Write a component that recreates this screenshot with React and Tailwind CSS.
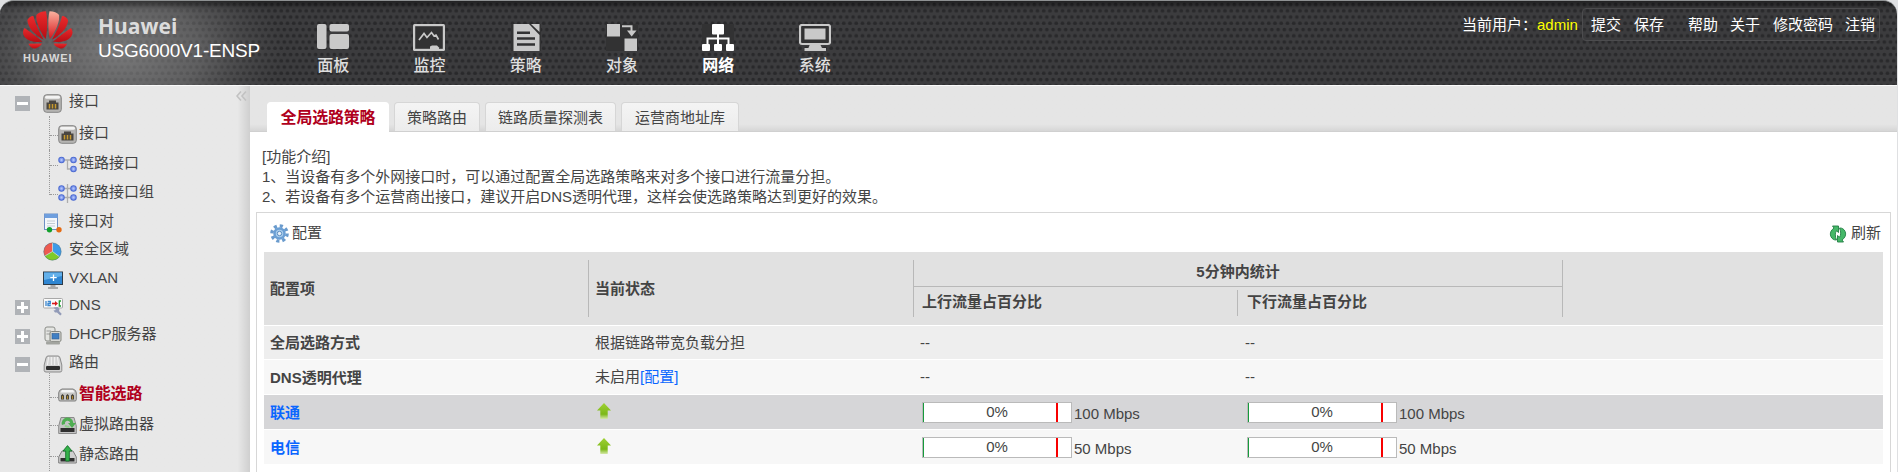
import React from "react";

const petals = [
  "M22.6 28 C16 19 12.6 10 13.4 4 C15 1.6 19 .3 23 .2 C24.8 8 24.4 20 22.6 28Z",
  "M20.6 28.8 C12 24 5 17 4.4 9.5 C5 7 8 5 10.4 5 C12.5 14 17 22 20.6 28.8Z",
  "M19.6 30.8 C11 31.5 4.5 30 1.3 25.5 C-.6 22.5 -.3 20 1.5 17 C7 20.5 14 26 19.6 30.8Z",
  "M19 32.6 L5.4 32.8 C7 36.5 10 38.2 13 37.3 C16 36.3 18 34.5 19 32.6Z",
];

function Logo() {
  return (
    <svg width="50" height="39" viewBox="0 0 50 39">
      <defs>
        <linearGradient id="red" x1="0" y1="0" x2="0" y2="1">
          <stop offset="0" stopColor="#ea2a2c" />
          <stop offset="1" stopColor="#b80d14" />
        </linearGradient>
        <linearGradient id="shine" x1="0" y1="0" x2="0" y2="1">
          <stop offset="0" stopColor="#f9b3a0" />
          <stop offset="1" stopColor="#d8151b" />
        </linearGradient>
      </defs>
      <g fill="url(#red)">{petals.map((d) => <path key={d} d={d} />)}</g>
      <g fill="url(#red)" transform="translate(49.5 0) scale(-1 1)">
        {petals.map((d, i) => <path key={d} d={d} fill={i === 0 ? "url(#shine)" : undefined} />)}
      </g>
    </svg>
  );
}

const NAV = [
  ["面板", <g key="a"><rect x="0" y="0" width="9.5" height="25" rx="2" /><rect x="12.5" y="0" width="19.5" height="7.5" rx="2" /><rect x="12.5" y="10" width="19.5" height="15" rx="2" /></g>],
  ["监控", <g key="b"><rect x="0" y="0" width="32" height="27" rx="1.5" /><rect x="2.2" y="2.2" width="27.6" height="22.6" fill="#323233" /><path d="M6 16 L11 9.5 L14 13.5 L18.5 8.5 L21 12 L23 11 L25.5 15.5" fill="none" stroke="#c9c9c9" strokeWidth="1.7" /><path d="M17 26 V22.5 L19 21.5 H24 L26 23.5 V26Z" /></g>],
  ["策略", <g key="c"><rect x="1" width="30" height="27" fill="#323233" /><path d="M3.5 0 H19 L29.5 11 V27 H3.5Z" /><path d="M21 0 H29.5 V8Z" /><path d="M7 8.7 H20 M7 14.5 H25 M7 20.5 H25" stroke="#323233" strokeWidth="2.6" /></g>],
  ["对象", <g key="d"><rect x="0" width="32" height="27" fill="#323233" /><rect x="1" width="13" height="12.5" /><rect x="18.5" y="14.5" width="12.5" height="12.5" /><path d="M16 2.3 H25.5 V8" fill="none" stroke="#c9c9c9" strokeWidth="2" /><path d="M21 6.5 H30.5 L25.7 12.5Z" /></g>],
  ["网络", <g key="e"><rect x="0" width="32" height="27" fill="#323233" /><g fill="#fff"><rect x="10" width="12" height="10.5" rx="1" /><rect x="0" y="20" width="8" height="7" rx="1" /><rect x="12" y="20" width="8" height="7" rx="1" /><rect x="24" y="20" width="8" height="7" rx="1" /></g><path d="M16 10 V20 M5.5 20 V14.5 H26.5 V20" fill="none" stroke="#fff" strokeWidth="2" /></g>],
  ["系统", <g key="f"><rect x="1" y="1" width="30" height="19" rx="2" fill="#323233" stroke="#c9c9c9" strokeWidth="2.2" /><rect x="5.5" y="4.5" width="21" height="11" /><path d="M11 20 H21 L23 24 H27 V27 H5.5 V24 H9.5Z" /></g>],
];

function Port() {
  return (
    <svg width="19" height="19" viewBox="0 0 19 19">
      <rect x=".7" y=".7" width="17.6" height="17.6" rx="3" fill="#b5b4b2" stroke="#858585" />
      <rect x="2" y="1.8" width="15" height="3" rx="1.5" fill="#f3f3f3" />
      <path d="M3.5 15.5 V8.500 H6 V6.500 H13 V8.500 H15.500 V15.500Z" fill="#4a4641" />
      <path d="M6.500 10 V14.500 M9.500 10 V14.500 M12.500 10 V14.500" stroke="#c89a2e" strokeWidth="1.500" />
    </svg>
  );
}

function Links({ group }) {
  const dots = group ? [[3.5, 4.5], [15.5, 4.5], [3.5, 13.5], [15.5, 13.5]] : [[3.5, 5], [15.5, 5], [15.5, 14]];
  return (
    <svg width="19" height="19" viewBox="0 0 19 19">
      <path d={group ? "M9.5 0 V19 M3 4.5 H16 M3 13.5 H16" : "M3 5 H16 M9.5 5 V14 H15"} stroke="#adadad" strokeWidth="1.3" fill="none" />
      {dots.map(([x, y]) => (
        <g key={x + "-" + y}>
          <circle cx={x} cy={y} r="2.700" fill="#87a0f0" stroke="#4f6dd2" strokeWidth="1.100" />
          <circle cx={x} cy={y} r="1" fill="#b5c6fb" />
        </g>
      ))}
    </svg>
  );
}

const ICONS = {
  port: <Port />,
  link: <Links />,
  group: <Links group />,
  pair: (
    <svg width="19" height="20" viewBox="0 0 19 20">
      <rect x="1.5" y="1" width="13" height="15.5" fill="#f4f7fb" stroke="#6d8fc4" />
      <rect x="1.5" y="1" width="13" height="4" fill="#6f9fde" />
      <path d="M4 8 H12 M4 10.5 H12 M4 13 H12" stroke="#c4ccd4" />
      <circle cx="6.5" cy="16.7" r="2.7" fill="#12a02c" /><circle cx="16" cy="16.7" r="2.7" fill="#e56a12" />
    </svg>
  ),
  zone: (
    <svg width="19" height="19" viewBox="0 0 19 19">
      <circle cx="9.5" cy="9.5" r="8.8" fill="#3d9be9" />
      <path d="M9.5 9.5 V.7 A8.8 8.8 0 0 0 1.9 13.9Z" fill="#ee5a50" />
      <path d="M9.5 9.5 L1.9 13.9 A8.8 8.8 0 0 0 16.5 14.8Z" fill="#7fcb2a" />
      <path d="M9.5 .7 V9.5 L1.9 13.9 M9.5 9.5 L16.5 14.8" stroke="#cfe0d4" strokeWidth=".8" fill="none" />
      <circle cx="9.5" cy="9.5" r="8.600" fill="none" stroke="#5e6f6a" strokeOpacity=".5" strokeWidth=".8" />
    </svg>
  ),
  vxlan: (
    <svg width="20" height="19" viewBox="0 0 20 19">
      <rect x=".5" y="1" width="19" height="12.5" fill="#2f86d2" stroke="#2d3b48" />
      <path d="M1 1.5 H19 V5 L1 9Z" fill="#63b0ea" />
      <path d="M10.5 3.5 V10 M7.3 6.7 H13.7" stroke="#fff" strokeWidth="1.3" />
      <path d="M7.5 14 H12.5 V16 H15 V18 H5 V16 H7.5Z" fill="#aaa" />
    </svg>
  ),
  dns: (
    <svg width="20" height="19" viewBox="0 0 20 19">
      <rect x=".5" y="1.5" width="19" height="9.5" rx="1" fill="#fafafa" stroke="#a8a8a8" />
      <path d="M3 4 V9 M4.700 4.5 H7.3 V6.5 H5 V8.5 H7.800" stroke="#3b87cf" strokeWidth="1.3" fill="none" />
      <path d="M9 6.5 H13" stroke="#d61c1c" strokeWidth="1.6" /><path d="M12 4 L15 6.5 L12 9Z" fill="#d61c1c" />
      <path d="M18 4 H16.3 V9 H18" stroke="#1f9e2f" strokeWidth="1.3" fill="none" />
      <path d="M10.500 10.500 L14.500 10 L16.500 12 L16 14 L18.800 17 L17.300 18.500 L14 15.500 L12 15.500 L10.500 13.500 L13 13Z" fill="#929bb8" />
    </svg>
  ),
  dhcp: (
    <svg width="19" height="19" viewBox="0 0 19 19">
      <rect x="2" y="1" width="10" height="14" rx="2" fill="#e4e5e2" stroke="#8b8d88" />
      <path d="M3.5 5 H8 M3.5 8 H7" stroke="#999" />
      <rect x="7" y="5.5" width="11" height="10" rx="1.5" fill="#d7d8d4" stroke="#83857f" />
      <rect x="9" y="7.5" width="7" height="5.5" fill="#3f7fc4" stroke="#2f5c91" strokeWidth=".6" />
      <rect x="3" y="15.5" width="14" height="3" rx="1" fill="#a2a49f" />
    </svg>
  ),
  route: (
    <svg width="20" height="18" viewBox="0 0 20 18">
      <path d="M5 1 H15 Q16.500 1 17 3 L18.800 10 V15.500 Q18.800 17 17 17 H3 Q1.200 17 1.200 15.500 V10 L3 3 Q3.500 1 5 1Z" fill="#d4d4d4" stroke="#8a8a8a" />
      <path d="M5.5 2 L4.500 10 M8.3 2 V10 M11.700 2 V10 M14.500 2 L15.500 10" stroke="#f4f4f4" />
      <rect x="3" y="11" width="14" height="4" rx="1" fill="#2f2f2f" />
    </svg>
  ),
  smart: (
    <svg width="19" height="14" viewBox="0 0 19 14">
      <path d="M4 1 H15 Q18.300 2 18.300 5 V11.500 Q18.300 13 17 13 H2 Q.7 13 .7 11.500 V5 Q.7 2 4 1Z" fill="#c4c4c2" stroke="#7f7f7f" />
      <path d="M4 2 H15 L16.5 4.5 H2.5Z" fill="#f4f4f4" />
      <path d="M3 11.5 V7.5 L4.500 6 L6 7.500 V11.5Z M8 11.5 V7.5 L9.500 6 L11 7.500 V11.5Z M13 11.5 V7.5 L14.500 6 L16 7.500 V11.5Z" fill="#4b4538" />
      <path d="M4.5 8 V11 M9.5 8 V11 M14.5 8 V11" stroke="#c89a2e" strokeWidth=".8" />
    </svg>
  ),
  virtual: (
    <svg width="19" height="19" viewBox="0 0 19 19">
      <path d="M3 1.500 H16 L18.3 10 V17.5 H.7 V10Z" fill="#c4c4c4" stroke="#8a8a8a" />
      <rect x="2.5" y="12" width="14" height="4" fill="#2f2f2f" />
      <path d="M5.500 8.500 A4.200 4.200 0 1 1 13.700 7" fill="none" stroke="#4fae52" strokeWidth="3.200" />
      <path d="M10 7 H18 L14 12Z" fill="#4fae52" />
      <path d="M11.500 10.500 A4.200 4.200 0 0 1 7 9.500" fill="none" stroke="#8fd08c" strokeWidth="2" />
    </svg>
  ),
  static: (
    <svg width="19" height="19" viewBox="0 0 19 19">
      <path d="M4 6 H15 L18.3 12 V18 H.7 V12Z" fill="#cfcfcf" stroke="#7d7d7d" />
      <rect x="2.5" y="13" width="14" height="3.5" fill="#2f2f2f" />
      <path d="M7.7 16 V6 H5 L9.5 .6 L14 6 H11.3 V16Z" fill="#35b24a" stroke="#14702a" strokeWidth=".9" />
    </svg>
  ),
};

function Toggle({ open }) {
  return (
    <span className="flex h-[15px] w-[15px] items-center justify-center bg-[#b0b3b7]">
      <svg width="11" height="11" viewBox="0 0 11 11">
        <path d={open ? "M0 5.5 H11" : "M0 5.5 H11 M5.5 0 V11"} stroke="#fff" strokeWidth="3" />
      </svg>
    </span>
  );
}

function Root({ h, icon, open, toggle = true, children }) {
  return (
    <div className={`flex items-center pl-[15px] ${h}`}>
      <span className="mt-[5px] w-7">{toggle && <Toggle open={open} />}</span>
      <span className="mt-1 flex w-[26px] items-center">{ICONS[icon]}</span>
      <span>{children}</span>
    </div>
  );
}

function Leaf({ h, icon, last, active, children }) {
  return (
    <div className={`flex pl-[49px] ${h}`}>
      <span className={`w-[9px] border-l border-dotted border-[#999] ${last ? "h-[60%]" : "h-full"}`}>
        <span className={`block w-full border-b border-dotted border-[#999] ${last ? "h-full" : "h-[60%]"}`} />
      </span>
      <span className="flex h-full items-center">
        <span className="mt-0.5 w-[21px]">{ICONS[icon]}</span>
        <span className={active ? "text-base font-bold tracking-[-0.2px] text-[#b0001c]" : ""}>{children}</span>
      </span>
    </div>
  );
}

function Bar({ speed }) {
  return (
    <div className="flex items-center pl-2 pt-px">
      <div className="flex h-[21px] w-[150px] border border-[#bababa] bg-white">
        <span className="w-px bg-[#169b3c]" />
        <span className="w-[132px] pl-[14px] text-center leading-[18px]">0%</span>
        <span className="w-[2px] bg-[#f80000]" />
      </div>
      <span className="pl-[2px] pt-0.5">{speed}</span>
    </div>
  );
}

function Up() {
  return (
    <svg className="mb-[3px] ml-px" width="16" height="18" viewBox="0 0 16 18">
      <defs>
        <linearGradient id="up" x1="0" y1="0" x2="0" y2="1">
          <stop offset="0" stopColor="#9fd134" /><stop offset=".7" stopColor="#7cb818" /><stop offset="1" stopColor="#d5e8a8" />
        </linearGradient>
      </defs>
      <path d="M8 1 L15 8.500 H11.7 V17 H4.3 V8.500 H1Z" fill="url(#up)" />
    </svg>
  );
}

function Row({ className, name, state, up, down }) {
  return (
    <div className={`grid grid-cols-[325px_325px_325px_1fr] items-center border-b border-white ${className}`}>
      <div className="pl-1.5 pt-px font-bold">{name}</div>
      <div className="pl-1.5">{state}</div>
      <div>{up}</div>
      <div>{down}</div>
    </div>
  );
}

const Link = ({ children }) => <span className="text-[#0a66ff]">{children}</span>;
const Dash = () => <span className="pl-1.5">--</span>;

function Tab({ active, className, children }) {
  return (
    <div
      className={`flex items-center justify-center rounded-t-[4px] border border-b-0 pt-px ${
        active ? "border-white bg-white text-base font-bold tracking-[-0.2px] text-[#b0001c]" : "border-[#d6d6d6] bg-gradient-to-b from-[#f4f4f4] to-[#ececec]"
      } ${className}`}
    >
      {children}
    </div>
  );
}

export default function App() {
  return (
    <div className="flex h-[472px] w-[1898px] flex-col overflow-hidden bg-[#dfe0e2] text-[15px] leading-5 text-[#444]" style={{ fontFamily: '"Liberation Sans", "Noto Sans CJK SC", sans-serif' }}>
      <header className="relative flex h-[85px] w-[1897px] shrink-0 overflow-hidden rounded-t-[14px] border-t border-[#8e9192] bg-[#3c3c3e]">
        <svg className="absolute inset-0" width="1897" height="85">
          <defs>
            <pattern id="mesh" width="6.25" height="12.5" patternUnits="userSpaceOnUse">
              <circle cx="3.1" cy="3.5" r="1.9" fill="#29292b" />
              <circle cx="0" cy="9.75" r="1.9" fill="#29292b" />
              <circle cx="6.25" cy="9.75" r="1.9" fill="#29292b" />
            </pattern>
            <radialGradient id="glow" cx=".5" cy=".5" r=".5">
              <stop offset="0" stopColor="#a0a0a0" stopOpacity=".62" />
              <stop offset=".5" stopColor="#909090" stopOpacity=".42" />
              <stop offset="1" stopColor="#666" stopOpacity="0" />
            </radialGradient>
            <linearGradient id="shade" x1="0" y1="0" x2="0" y2="1">
              <stop offset="0" stopColor="#000" stopOpacity=".45" />
              <stop offset="1" stopColor="#000" stopOpacity="0" />
            </linearGradient>
          </defs>
          <rect width="1897" height="85" fill="url(#mesh)" />
          <ellipse cx="118" cy="50" rx="165" ry="105" fill="url(#glow)" />
          <rect width="1897" height="9" fill="url(#shade)" />
        </svg>
        <div className="relative flex w-[285px]">
          <div className="flex w-[98px] flex-col pl-[23px] pt-2.5">
            <Logo />
            <span className="mt-[2px] text-[11px] font-bold leading-[12px] tracking-[0.9px] text-[#d8d8d8]">HUAWEI</span>
          </div>
          <div className="pt-3 text-white">
            <div className="text-[21px] font-bold leading-[27px] text-[#dcdcdc] [font-family:'Open_Sans',sans-serif]">Huawei</div>
            <div className="text-[19px] leading-[22px] tracking-[-0.2px]">USG6000V1-ENSP</div>
          </div>
        </div>
        <nav className="relative flex">
          {NAV.map(([label, icon]) => (
            <div key={label} className="flex w-[96.3px] flex-col items-center pt-[23px]">
              <svg width="32" height="27" viewBox="0 0 32 27" fill="#c9c9c9">{icon}</svg>
              <span className={`mt-[5px] text-base leading-5 ${label === "网络" ? "font-bold text-white" : "font-medium text-[#dedede]"}`}>{label}</span>
            </div>
          ))}
        </nav>
        <div className="relative ml-auto flex items-start pr-[17px] pt-[7px] text-white">
          <span className="w-[75px] pt-[7px]">当前用户：</span>
          <span className="w-[45px] pt-[7px] text-[#ff0]">admin</span>
          <div className="flex h-[33px] w-[298px] items-center rounded-sm border border-[#4c4c4e] pl-2">
            <span className="w-[43px]">提交</span>
            <span className="w-[54px]">保存</span>
            <span className="w-[42px]">帮助</span>
            <span className="w-[43px]">关于</span>
            <span className="w-[72px]">修改密码</span>
            <span>注销</span>
          </div>
        </div>
      </header>

      <div className="flex h-[387px] w-[1897px] border-t border-[#fafafa]">
        <aside className="relative w-[250px] shrink-0 bg-gradient-to-r from-[#e8e8e8] from-95% to-[#cfcfcf]">
          <svg className="absolute right-[3px] top-[5px]" width="11" height="10" viewBox="0 0 11 10" fill="none" stroke="#c2c2c2" strokeWidth="1.6">
            <path d="M5 .5 L1 5 L5 9.5 M10 .5 L6 5 L10 9.5" />
          </svg>
          <Root h="h-[30px]" icon="port" open>接口</Root>
          <Leaf h="h-[34px]" icon="port">接口</Leaf>
          <Leaf h="h-[26px]" icon="link">链路接口</Leaf>
          <Leaf h="h-[32px]" icon="group" last>链路接口组</Leaf>
          <Root h="h-[26px]" icon="pair" toggle={false}>接口对</Root>
          <Root h="h-[30px]" icon="zone" toggle={false}>安全区域</Root>
          <Root h="h-[28px]" icon="vxlan" toggle={false}>VXLAN</Root>
          <Root h="h-[25px]" icon="dns">DNS</Root>
          <Root h="h-[33px]" icon="dhcp">DHCP服务器</Root>
          <Root h="h-[23px]" icon="route" open>路由</Root>
          <Leaf h="h-[41px]" icon="smart" active>智能选路</Leaf>
          <Leaf h="h-[20px]" icon="virtual">虚拟路由器</Leaf>
          <Leaf h="h-[39px]" icon="static">静态路由</Leaf>
        </aside>

        <main className="flex flex-1 flex-col bg-white">
          <div className="flex h-[46px] shrink-0 items-end border-b border-[#d0d0d0] bg-gradient-to-b from-[#e5e5e5] from-85% to-[#d6d6d6] pl-[17px]">
            <Tab active className="-mb-px mr-[5px] h-[30px] w-[122px]">全局选路策略</Tab>
            <Tab className="mr-[5px] h-[29px] w-[86px]">策略路由</Tab>
            <Tab className="mr-[5px] h-[29px] w-[131px]">链路质量探测表</Tab>
            <Tab className="h-[29px] w-[118px]">运营商地址库</Tab>
          </div>
          <div className="pl-3 pt-[15px]">
            <p>[功能介绍]</p>
            <p>1、当设备有多个外网接口时，可以通过配置全局选路策略来对多个接口进行流量分担。</p>
            <p>2、若设备有多个运营商出接口，建议开启DNS透明代理，这样会使选路策略达到更好的效果。</p>
          </div>
          <section className="ml-1.5 mr-1.5 mt-[5px] flex flex-1 flex-col border border-b-0 border-[#d7d7d7] px-[7px]">
            <div className="flex h-[39px] shrink-0 items-center pl-1.5">
              <svg className="mt-0.5" width="19" height="19" viewBox="0 0 19 19">
                <circle cx="9.5" cy="9.5" r="7.6" fill="none" stroke="#6a9bcd" strokeWidth="3.4" strokeDasharray="3.1 2.87" />
                <circle cx="9.5" cy="9.5" r="5" fill="#a9cdec" stroke="#6b9fd4" strokeWidth="2.5" />
                <circle cx="9.5" cy="9.5" r="2.2" fill="#e8f1fa" stroke="#5a8cc0" strokeWidth="1" />
              </svg>
              <span className="pl-[3px]">配置</span>
              <span className="ml-auto flex items-center pr-0.5">
                <svg className="mt-0.5" width="18" height="18" viewBox="0 0 18 18" fill="#45b868" stroke="#237e44" strokeWidth=".9">
                  <path d="M3.500 1 H9.500 V7.500 L7.500 5.800 C5.800 8 6 11.500 7.500 15 C2.500 15.500 -1 9 3.300 4.500 L5 3Z" />
                  <path d="M14.500 17 H8.500 V10.500 L10.500 12.200 C12.200 10 12 6.500 10.500 3 C15.500 2.500 19 9 14.700 13.500 L13 15Z" />
                </svg>
                <span className="pl-1">刷新</span>
              </span>
            </div>
            <div className="grid h-[74px] shrink-0 grid-cols-[325px_325px_649px_1fr] border-b border-white bg-[#e1e1e1] py-2 font-bold">
              <div className="flex h-[57px] items-center border-r border-[#b8b8b8] pl-1.5">配置项</div>
              <div className="flex h-[57px] items-center border-r border-[#b8b8b8] pl-1.5">当前状态</div>
              <div className="h-[57px] border-r border-[#b8b8b8]">
                <div className="h-[27px] border-b border-[#b8b8b8] pt-0.5 text-center">5分钟内统计</div>
                <div className="grid grid-cols-2 pt-[3px]">
                  <div className="h-[26px] border-r border-[#b8b8b8] pl-2 pt-0.5">上行流量占百分比</div>
                  <div className="pl-[9px] pt-0.5">下行流量占百分比</div>
                </div>
              </div>
            </div>
            <Row className="h-[34px] shrink-0 bg-[#eee]" name="全局选路方式" state="根据链路带宽负载分担" up={<Dash />} down={<Dash />} />
            <Row className="h-[35px] shrink-0 bg-[#f7f7f7]" name="DNS透明代理" state={<>未启用<Link>[配置]</Link></>} up={<Dash />} down={<Dash />} />
            <Row className="h-[35px] shrink-0 bg-[#d6d6d8]" name={<Link>联通</Link>} state={<Up />} up={<Bar speed="100 Mbps" />} down={<Bar speed="100 Mbps" />} />
            <Row className="h-[35px] shrink-0 bg-[#f7f7f7]" name={<Link>电信</Link>} state={<Up />} up={<Bar speed="50 Mbps" />} down={<Bar speed="50 Mbps" />} />
          </section>
        </main>
      </div>
    </div>
  );
}
